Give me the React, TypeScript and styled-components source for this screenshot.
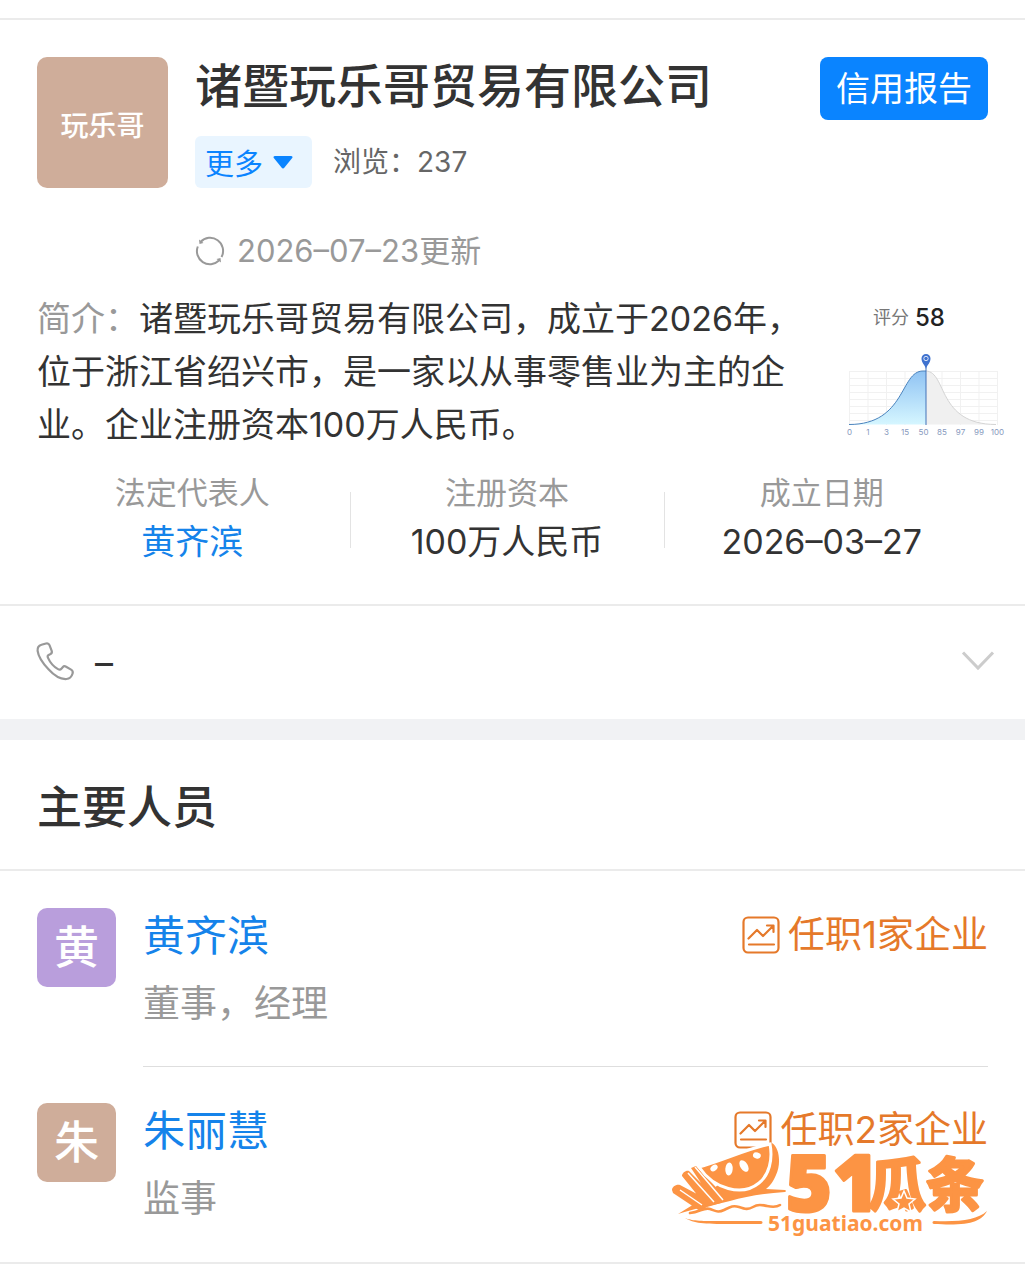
import React from "react";
import styled, { createGlobalStyle } from "styled-components";

const GlobalStyle = createGlobalStyle`
  * { box-sizing: border-box; }
  body {
    margin: 0;
    background: #fff;
    color: #333;
    font-family: Inter, "Noto Sans CJK SC", sans-serif;
    font-weight: 400;
  }
  h1, h2, p, dl, dt, dd, ul { margin: 0; padding: 0; }
  ul { list-style: none; }
  a { text-decoration: none; color: inherit; }
  button { font-family: inherit; border: 0; padding: 0; background: none; cursor: pointer; }
  svg { display: block; flex: none; }
`;

const Page = styled.main`
  padding-top: 18px;
`;

const Company = styled.section`
  border-top: 2px solid #ebebeb;
  border-bottom: 2px solid #ebebeb;
  padding-top: 37px;
`;

const Header = styled.header`
  display: flex;
  align-items: flex-start;
  gap: 27px;
  padding: 0 37px;
`;

const Avatar = styled.div<{ $size: number; $color: string; $font: number }>`
  flex: none;
  display: flex;
  align-items: center;
  justify-content: center;
  width: ${(p) => p.$size}px;
  height: ${(p) => p.$size}px;
  border-radius: 10px;
  background: ${(p) => p.$color};
  color: #fff;
  font-size: ${(p) => p.$font}px;
  font-weight: 500;
  line-height: 1;
`;

const LogoAvatar = styled(Avatar)`
  padding-top: 6px;
`;

const HeaderBody = styled.div`
  flex: 1;
  min-width: 0;
`;

const CompanyName = styled.h1`
  font-size: 47px;
  line-height: 58px;
  font-weight: 500;
`;

const MetaRow = styled.div`
  display: flex;
  align-items: center;
  gap: 21px;
  margin-top: 21px;
  font-size: 28px;
  line-height: 52px;
  color: #666;
`;

const MoreButton = styled.button`
  display: flex;
  align-items: center;
  gap: 10px;
  height: 52px;
  padding: 0 19px 0 10px;
  border-radius: 6px;
  background: #e9f5ff;
  color: #0a84ff;
  font-size: 29px;
`;

const Updated = styled.p`
  display: flex;
  align-items: center;
  gap: 12px;
  margin-top: 40px;
  font-size: 31px;
  line-height: 46px;
  color: #999;
`;

const ReportButton = styled.button`
  flex: none;
  height: 63px;
  padding: 0 16px;
  border-radius: 8px;
  background: #0a84ff;
  color: #fff;
  font-size: 34px;
  line-height: 62px;
`;

const Summary = styled.div`
  display: flex;
  justify-content: space-between;
  align-items: flex-start;
  margin-top: 18px;
  padding: 0 20px 0 37px;
`;

const Intro = styled.p`
  flex: 0 1 768px;
  font-size: 34px;
  line-height: 53px;
`;

const Muted = styled.span`
  color: #999;
`;

const Score = styled.div`
  flex: none;
  width: 160px;
  padding-top: 10px;
`;

const ScoreLabel = styled.p`
  display: flex;
  align-items: center;
  justify-content: center;
  gap: 6px;
  padding-right: 32px;
  margin-bottom: 15px;
  font-size: 18px;
  line-height: 32px;
  color: #777;
`;

const ScoreValue = styled.strong`
  font-size: 24px;
  font-weight: 500;
  color: #222;
`;

const Stats = styled.dl`
  display: flex;
  padding: 17px 46px 38px 35px;
`;

const Stat = styled.div`
  position: relative;
  flex: 1;
  text-align: center;
  & + &::before {
    content: "";
    position: absolute;
    left: 0;
    top: 24px;
    width: 1px;
    height: 56px;
    background: #e3e3e3;
  }
`;

const StatLabel = styled.dt`
  font-size: 31px;
  line-height: 50px;
  color: #999;
`;

const StatValue = styled.dd<{ $link?: boolean }>`
  font-size: 34px;
  line-height: 48px;
  color: ${(p) => (p.$link ? "#1583ea" : "#333")};
`;

const PhoneRow = styled.button`
  display: flex;
  align-items: center;
  width: 100%;
  height: 113px;
  padding: 0 30px 4px 35px;
  color: #333;
  font-size: 36px;
  text-align: left;
`;

const PhoneNumber = styled.span`
  flex: 1;
  padding: 4px 0 0 20px;
`;

const Band = styled.div`
  height: 21px;
  background: #f1f2f4;
`;

const People = styled.section`
  position: relative;
  border-bottom: 2px solid #ebebeb;
`;

const SectionTitle = styled.h2`
  padding: 35px 37px 29px;
  border-bottom: 2px solid #ebebeb;
  font-size: 45px;
  line-height: 65px;
  font-weight: 500;
`;

const Person = styled.li`
  display: flex;
  gap: 27px;
  padding: 36px 37px 0;
  &:first-child {
    padding-top: 37px;
  }
`;

const PersonBody = styled.div<{ $last: boolean }>`
  flex: 1;
  display: grid;
  grid-template-columns: 1fr auto;
  height: 159px;
  align-content: start;
  border-bottom: ${(p) => (p.$last ? "0" : "1px solid #dedede")};
`;

const PersonName = styled.a`
  font-size: 42px;
  line-height: 56px;
  color: #1583ea;
`;

const Role = styled.p`
  grid-column: 1 / -1;
  margin-top: 12px;
  font-size: 37px;
  line-height: 56px;
  color: #999;
`;

const Posts = styled.a`
  display: flex;
  align-items: center;
  gap: 8px;
  font-size: 37px;
  line-height: 54px;
  height: 54px;
  color: #e5792a;
`;

const Watermark = styled.svg`
  position: absolute;
  right: 35px;
  bottom: 15px;
  pointer-events: none;
`;

const CaretIcon = () => (
  <svg width="20" height="15" viewBox="0 0 20 15" fill="#0a84ff">
    <path d="M2 1h16c1.500 0 2 1 1.200 2l-7.700 9.500c-1 1.200-2 1.200-3 0L.8 3C0 2 .5 1 2 1z" />
  </svg>
);

const RefreshIcon = () => (
  <svg width="30" height="30" viewBox="0 0 30 30" fill="none" stroke="#999" strokeWidth="2">
    <path d="M5.500 6A13 13 0 0 1 26.500 21M2.800 10.500A13 13 0 0 0 24 24.500" />
    <path d="M4 3.500 4.500 8 8.500 7zM26 26.500 25.500 22 21.500 23z" fill="#999" stroke="none" />
  </svg>
);

const PhoneIcon = () => (
  <svg width="40" height="40" viewBox="0 0 40 40" fill="none" stroke="#999" strokeWidth="2.200" strokeLinejoin="round">
    <path d="M6.500 3.800 11 2.500c1.800-.5 2.800 0 3.500 1.700l2.200 5.600c.5 1.500.1 2.500-1.200 3.200l-1.800.9c-1.100.6-1.300 1.700-.7 3 2.200 4.800 5.800 9 10 11.200 1.400.7 2.500.6 3.400-.4l1.300-1.500c1-1.200 2-1.300 3.400-.5l5 2.900c1.500.9 2 2.200 1.500 3.900-.9 3-3.300 5.300-6.100 5.500-5.500.4-12.500-3.600-18-9.700C7.500 21.800 3.200 14.500 2.600 9.800 2.300 6.600 3.600 4.700 6.500 3.800z" />
  </svg>
);

const ChevronIcon = () => (
  <svg width="34" height="22" viewBox="0 0 34 22" fill="none" stroke="#ccc" strokeWidth="3">
    <path d="M2 2.500 17 18 32 2.500" />
  </svg>
);

const TrendIcon = () => (
  <svg width="38" height="38" viewBox="0 0 38 38" fill="none" stroke="#e5792a" strokeWidth="2.200" strokeLinecap="round" strokeLinejoin="round">
    <rect x="1.500" y="1.500" width="35" height="35" rx="4.500" />
    <path d="M6.500 22.500 15 14l6 6 10-10M25 9.500h6.500V16M7 28.500h25" />
  </svg>
);

const ticks = ["0", "1", "3", "15", "50", "85", "97", "99", "100"];

const ScoreChart = () => (
  <svg width="160" height="92" viewBox="0 0 160 92" role="img" aria-label="评分 58">
    <defs>
      <linearGradient id="fill" x1="0" y1="0" x2="0" y2="1">
        <stop offset="0" stopColor="#90c3f3" />
        <stop offset="1" stopColor="#d5f6ff" />
      </linearGradient>
    </defs>
    <g stroke="#f1f1f1" strokeWidth="1">
      {ticks.map((t, i) => (
        <path key={t} d={`M${4.5 + i * 18.5} 22V76`} />
      ))}
      {[22, 29, 36, 43, 50, 57, 64, 71].map((y) => (
        <path key={y} d={`M4 ${y}.5H153`} />
      ))}
    </g>
    <path d="M81 22C102 23 92 75.500 151 75.500H81z" fill="#f0f0f0" />
    <path d="M81 22C102 23 92 75.500 151 75.500" fill="none" stroke="#d4d4d4" />
    <path d="M4 75.500C61 75.500 55 22 78 22h3v53.500z" fill="url(#fill)" />
    <path d="M4 75.500C61 75.500 55 22 78 22h3" fill="none" stroke="#4b83bd" />
    <path d="M81 12v64" stroke="#4272b8" />
    <path d="M81 20c-1-4-4.500-6-4.500-10.500a4.500 4.500 0 0 1 9 0c0 4.500-3.500 6.500-4.500 10.500z" fill="#3f72cf" />
    <circle cx="81" cy="9.500" r="2.200" fill="#3f72cf" stroke="#fff" strokeWidth=".8" />
    <g fontFamily="Inter, sans-serif" fontSize="8" fill="#8799bd" textAnchor="middle">
      {ticks.map((t, i) => (
        <text key={t} x={4.5 + i * 18.5} y="86">{t}</text>
      ))}
    </g>
  </svg>
);

const MelonLogo = () => (
  <Watermark width="322" height="132" viewBox="0 -24 322 132" fill="#fc9444">
    {/* rind and the curl below it */}
    <path d="M104 4c8 5 9 22 4 32-3 7-6 11-10 14l19 1c1 0 1 2 0 2-18 1-38 4-55 9-20 5-34 7-52 13l13-8z" />
    {/* cut strips */}
    <path d="M4 51c0-3 4-6 8-5l34 18-14 8L5 54zM14 37c0-3 4-6 7-5l32 32-14 4zM23 29l5-2 32 34-13 4z" />
    <path d="M12 51l22 15M20 34l26 29M27 28l28 33" fill="none" stroke="#fff" strokeWidth="1.500" />
    {/* flesh */}
    <path d="M31 28C56 21 78 10 102 5c3 16-1 31-11 39-17 14-45 6-60-16z" stroke="#fff" strokeWidth="3" />
    <g fill="#fff">
      <ellipse cx="46" cy="29" rx="4" ry="2.800" transform="rotate(-38 46 29)" />
      <ellipse cx="61" cy="30" rx="3.700" ry="6.500" transform="rotate(4 61 30)" />
      <ellipse cx="76" cy="27" rx="3.700" ry="6.500" transform="rotate(-32 76 27)" />
      <ellipse cx="89" cy="16.500" rx="4" ry="3" transform="rotate(15 89 16)" />
    </g>
    {/* waves */}
    <path d="M22 74c10-1 14-6 20-4s8 4 14 1 9-5 15-3 9 3 14 0 9-2 14-1 10 1 13-1" fill="none" stroke="#fc9444" strokeWidth="2.600" strokeLinecap="round" />
    <path d="M17 79c10 4 22 3 76 3 2 0 2 3 0 3-54 0-64 1-76-6zM266 82c26 1 43-1 53-10-6 11-18 15-53 13-2 0-2-3 0-3z" />
    <g stroke="#fc9444" strokeLinejoin="round">
      <text x="118 165" y="72" fontFamily='"Noto Sans", "Open Sans", sans-serif' fontSize="78" fontWeight="900" strokeWidth="3">51</text>
      <text x="200" y="67" fontFamily='"Noto Sans CJK SC", sans-serif' fontSize="58" fontWeight="700" strokeWidth="3">瓜条</text>
      <text x="100" y="92" fontFamily='"Noto Sans", "Open Sans", sans-serif' fontSize="21" fontWeight="700" strokeWidth="0">51guatiao.com</text>
    </g>
    <path d="m236 52 3 7 8 1-6 5 2 8-7-4-7 4 2-8-6-5 8-1z" stroke="#fff" strokeWidth="1.500" />
  </Watermark>
);

const people = [
  { initial: "黄", name: "黄齐滨", role: "董事，经理", posts: "任职1家企业", color: "#b99edc" },
  { initial: "朱", name: "朱丽慧", role: "监事", posts: "任职2家企业", color: "#cfad9a" },
];

export default function App() {
  return (
    <Page>
      <GlobalStyle />
      <Company>
        <Header>
          <LogoAvatar $size={131} $color="#cfad9a" $font={28}>玩乐哥</LogoAvatar>
          <HeaderBody>
            <CompanyName>诸暨玩乐哥贸易有限公司</CompanyName>
            <MetaRow>
              <MoreButton type="button">更多<CaretIcon /></MoreButton>
              <span>浏览：237</span>
            </MetaRow>
            <Updated><RefreshIcon />2026–07–23更新</Updated>
          </HeaderBody>
          <ReportButton type="button">信用报告</ReportButton>
        </Header>
        <Summary>
          <Intro>
            <Muted>简介：</Muted>诸暨玩乐哥贸易有限公司，成立于2026年，位于浙江省绍兴市，是一家以从事零售业为主的企业。企业注册资本100万人民币。
          </Intro>
          <Score>
            <ScoreLabel>评分 <ScoreValue>58</ScoreValue></ScoreLabel>
            <ScoreChart />
          </Score>
        </Summary>
        <Stats>
          <Stat>
            <StatLabel>法定代表人</StatLabel>
            <StatValue $link><a href="#legal">黄齐滨</a></StatValue>
          </Stat>
          <Stat>
            <StatLabel>注册资本</StatLabel>
            <StatValue>100万人民币</StatValue>
          </Stat>
          <Stat>
            <StatLabel>成立日期</StatLabel>
            <StatValue>2026–03–27</StatValue>
          </Stat>
        </Stats>
      </Company>
      <PhoneRow type="button">
        <PhoneIcon />
        <PhoneNumber>–</PhoneNumber>
        <ChevronIcon />
      </PhoneRow>
      <Band />
      <People>
        <SectionTitle>主要人员</SectionTitle>
        <ul>
          {people.map((p, i) => (
            <Person key={p.name}>
              <Avatar $size={79} $color={p.color} $font={45}>{p.initial}</Avatar>
              <PersonBody $last={i === people.length - 1}>
                <PersonName href="#person">{p.name}</PersonName>
                <Posts href="#posts"><TrendIcon />{p.posts}</Posts>
                <Role>{p.role}</Role>
              </PersonBody>
            </Person>
          ))}
        </ul>
        <MelonLogo />
      </People>
    </Page>
  );
}
